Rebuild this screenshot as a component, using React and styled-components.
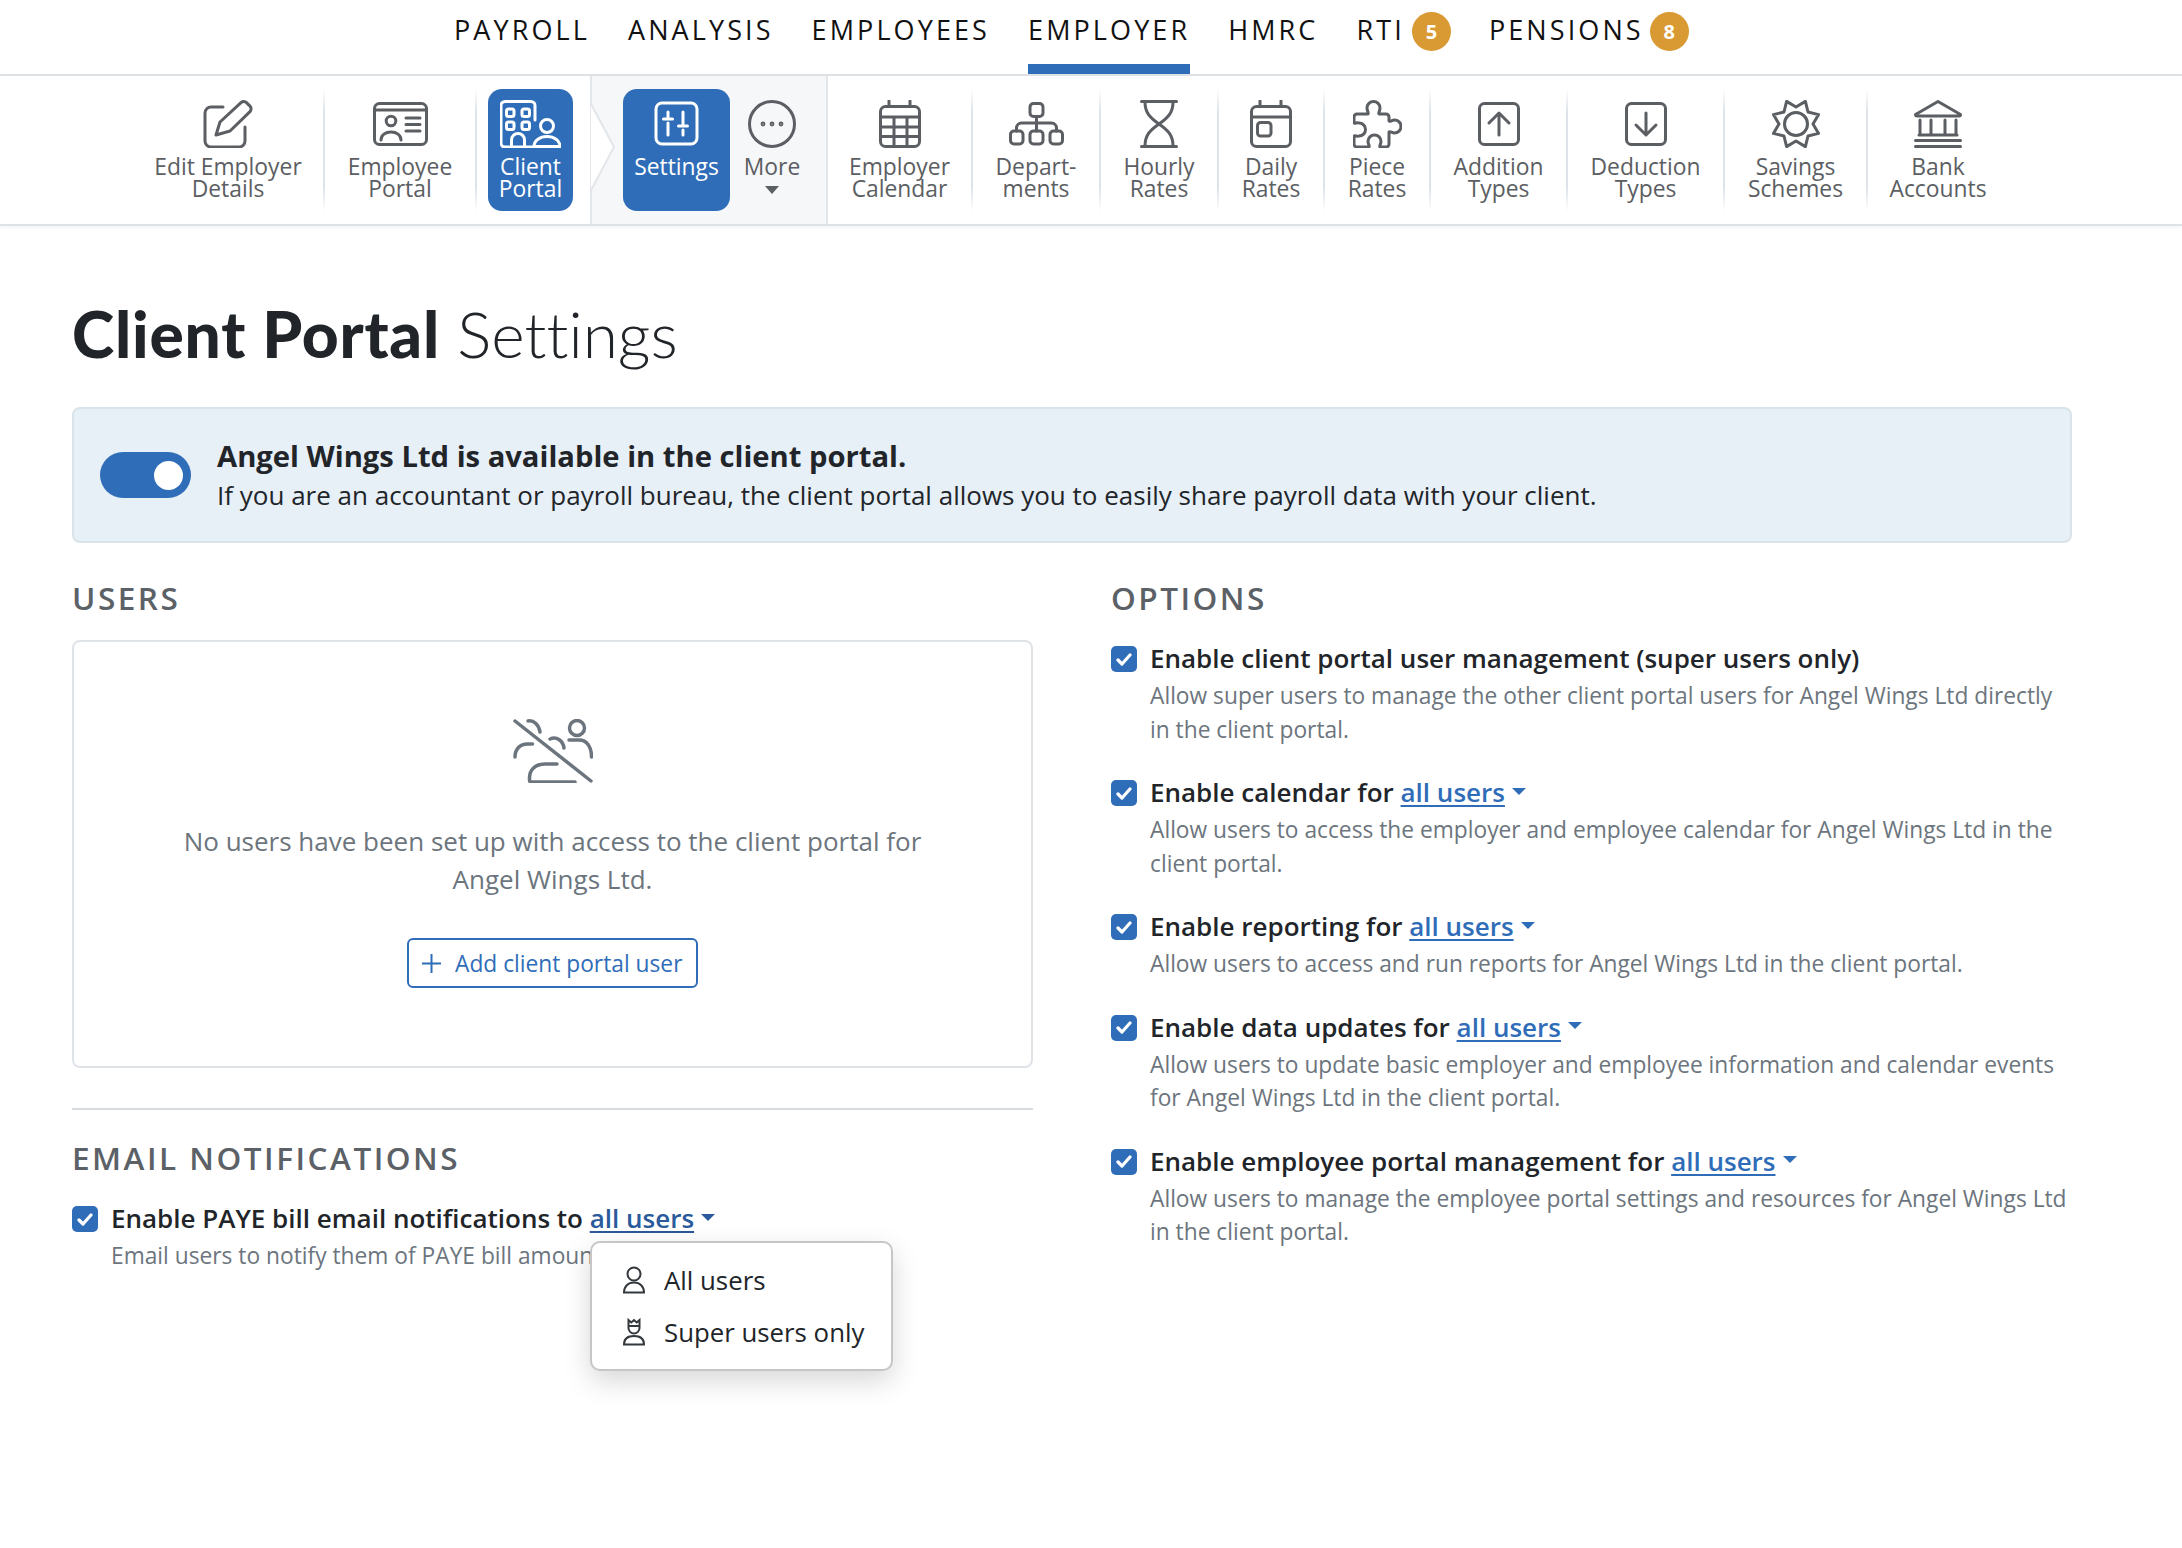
import React from "react";
import styled, { createGlobalStyle } from "styled-components";

const BLUE = "#2f6db8";
const ICON_GREY = "#5b5e62";

const GlobalStyle = createGlobalStyle`
  html, body {
    margin: 0;
    padding: 0;
    background: #fff;
    font-family: "Open Sans", "Liberation Sans", sans-serif;
    color: #212529;
  }
  #root { min-height: 1548px; }
  * { box-sizing: border-box; }
`;

const TopNav = styled.nav`
  display: flex;
  height: 76px;
  padding-left: 454px;
  gap: 38px;
  border-bottom: 2px solid #dfe3e7;
`;

const NavItem = styled.a`
  display: flex;
  align-items: flex-start;
  height: 74px;
  padding-top: 10px;
  font-size: 27px;
  line-height: 40px;
  letter-spacing: 3.1px;
  color: #111;
  border-bottom: 10px solid ${({ $active }) => ($active ? BLUE : "transparent")};
`;

const Badge = styled.span`
  width: 39px;
  height: 39px;
  margin: 2px 0 0 ${({ $gap }) => $gap}px;
  border-radius: 50%;
  background: #d99a33;
  color: #fff;
  font-size: 20px;
  font-weight: 700;
  line-height: 39px;
  letter-spacing: 0;
  text-align: center;
`;

const Toolbar = styled.div`
  display: flex;
  height: 150px;
  padding-left: 133px;
  border-bottom: 2px solid #dfe3e7;
  box-shadow: 0 1px 3px rgba(60, 70, 80, 0.08);
`;

const ToolItem = styled.a`
  display: flex;
  flex-direction: column;
  align-items: center;
  flex: none;
  width: ${({ $w }) => $w}px;
  height: 122px;
  margin: 13px 0;
  padding-top: 11px;
  color: ${ICON_GREY};
  font-size: 22.85px;
  line-height: 22.2px;
  text-align: center;
  border-right: ${({ $plain }) => ($plain ? "0" : "2px solid")};
  border-image: linear-gradient(to bottom, rgba(221, 227, 232, 0), #dde3e8 20%, #dde3e8 80%, rgba(221, 227, 232, 0)) 1;
`;

const ActiveTool = styled(ToolItem)`
  width: ${({ $w }) => $w}px;
  margin-left: ${({ $ml }) => $ml || 0}px;
  border: 0;
  border-radius: 14px;
  background: ${BLUE};
  color: #fff;
`;

const ToolLabel = styled.span`
  display: block;
  margin-top: 8px;
  white-space: pre-line;
`;

const Glyph = styled.svg`
  display: block;
  flex: none;
  height: 48px;
  fill: none;
  stroke: currentColor;
  stroke-width: 3;
  stroke-linecap: round;
  stroke-linejoin: round;
`;

const ContextGroup = styled.div`
  position: relative;
  display: flex;
  flex: none;
  width: 238px;
  margin-left: 17px;
  padding-left: 31px;
  background: #f6f7f9;
  border-left: 2px solid #e2e6ea;
  border-right: 2px solid #e2e6ea;
`;

const Chevron = styled.svg`
  position: absolute;
  left: -2px;
  top: 26px;
  width: 26px;
  height: 90px;
`;

const MoreCaret = styled.span`
  display: block;
  width: 0;
  height: 0;
  margin-top: 8px;
  border-left: 7px solid transparent;
  border-right: 7px solid transparent;
  border-top: 8px solid ${ICON_GREY};
`;

const Main = styled.main`
  width: 2000px;
  margin-left: 72px;
`;

const Title = styled.h1`
  margin: 0;
  padding-top: 63px;
  height: 181px;
  font-family: Lato, "Open Sans", sans-serif;
  font-size: 64px;
  line-height: 90px;
  font-weight: 300;
  font-variant-ligatures: none;
  color: #212529;
  strong {
    font-weight: 900;
    letter-spacing: 0.8px;
  }
`;

const Banner = styled.section`
  display: flex;
  align-items: center;
  height: 136px;
  padding-left: 26px;
  gap: 26px;
  background: #e7eff7;
  border: 2px solid #d9e3ea;
  border-radius: 8px;
`;

const BannerCopy = styled.div`
  padding-top: 2px;
`;

const Toggle = styled.span`
  display: flex;
  align-items: center;
  justify-content: flex-end;
  flex: none;
  width: 91px;
  height: 46px;
  padding-right: 8px;
  border-radius: 23px;
  background: ${BLUE};
  &::after {
    content: "";
    width: 29px;
    height: 29px;
    border-radius: 50%;
    background: #fff;
  }
`;

const BannerTitle = styled.div`
  font-size: 29.2px;
  line-height: 39px;
  font-weight: 700;
`;

const BannerText = styled.div`
  font-size: 26px;
  line-height: 39px;
`;

const Columns = styled.div`
  display: grid;
  grid-template-columns: 961px 961px;
  column-gap: 78px;
  padding-top: 32px;
`;

const Heading = styled.h2`
  margin: 0;
  height: 64px;
  font-size: 31.5px;
  line-height: 46px;
  font-weight: 600;
  letter-spacing: 2.5px;
  color: #5b6166;
`;

const EmptyBox = styled.div`
  display: flex;
  flex-direction: column;
  align-items: center;
  height: 428px;
  margin-top: 1px;
  padding-top: 77px;
  border: 2px solid #dfe3e7;
  border-radius: 8px;
  color: #6c757d;
  font-size: 26px;
  line-height: 38px;
  text-align: center;
`;

const EmptyText = styled.p`
  margin: 39px 0 0;
  width: 780px;
`;

const AddButton = styled.button`
  display: flex;
  align-items: center;
  gap: 14px;
  width: 291px;
  height: 50px;
  margin-top: 40px;
  padding: 0 0 0 13px;
  border: 2px solid ${BLUE};
  border-radius: 6px;
  background: #fff;
  color: ${BLUE};
  font-family: inherit;
  font-size: 22.75px;
`;

const Divider = styled.hr`
  height: 2px;
  margin: 40px 0 25px;
  border: 0;
  background: #d7dbdf;
`;

const Option = styled.div`
  display: grid;
  grid-template-columns: 26px 1fr;
  column-gap: 13px;
  padding-bottom: 27px;
`;

const Check = styled.span`
  display: flex;
  align-items: center;
  justify-content: center;
  width: 26px;
  height: 26px;
  margin-top: 7px;
  border-radius: 5px;
  background: ${BLUE};
`;

const OptionLabel = styled.div`
  position: relative;
  display: flex;
  align-items: center;
  height: 40px;
  padding-bottom: 2px;
  font-size: 26px;
  font-weight: 600;
  white-space: pre;
`;

const OptionText = styled.div`
  grid-column: 2;
  font-size: 22.75px;
  line-height: 33.5px;
  color: #6c757d;
`;

const UsersLink = styled.a`
  color: ${({ $focus }) => ($focus ? "#2a5a9c" : BLUE)};
  text-decoration: underline;
  text-decoration-thickness: 2px;
  text-underline-offset: 3px;
`;

const Caret = styled.span`
  width: 0;
  height: 0;
  margin: -2px 0 0 7px;
  border-left: 7px solid transparent;
  border-right: 7px solid transparent;
  border-top: 7px solid ${({ $focus }) => ($focus ? "#2a5a9c" : BLUE)};
`;

const Menu = styled.div`
  position: absolute;
  left: 479px;
  top: 42px;
  z-index: 2;
  width: 303px;
  height: 130px;
  padding: 11px 0;
  background: #fff;
  border: 2px solid #c4c6c8;
  border-radius: 10px;
  box-shadow: 0 10px 28px rgba(0, 0, 0, 0.16);
`;

const MenuItem = styled.a`
  display: flex;
  align-items: center;
  gap: 18px;
  height: 52px;
  padding-left: 30px;
  font-size: 25.8px;
  font-weight: 400;
  color: #212529;
`;

const MenuGlyph = styled.svg`
  flex: none;
  width: 24px;
  height: 28px;
  fill: none;
  stroke: #33383d;
  stroke-width: 2;
`;

const tick = (
  <svg width="16" height="13" viewBox="0 0 16 13" fill="none" stroke="#fff" strokeWidth="3.2" strokeLinecap="round" strokeLinejoin="round">
    <path d="M2 7l4 4 8-9" />
  </svg>
);

const icons = {
  edit: (
    <Glyph viewBox="0 0 50 48" width="50">
      <path d="M20 7H8a6 6 0 0 0-6 6v28a6 6 0 0 0 6 6h28a6 6 0 0 0 6-6V27" />
      <path d="M13 35l4-13L38 2.6a4 4 0 0 1 5.5 0l3.5 3.5a4 4 0 0 1 0 5.5L27 31z" />
    </Glyph>
  ),
  card: (
    <Glyph viewBox="0 0 55 48" width="55">
      <rect x="1.5" y="3.5" width="52" height="41" rx="5" />
      <path d="M1.5 10h52M33 18h14M33 24.5h14M33 31h14M8 40c0-5 4.5-8 10-8s10 3 10 8" />
      <circle cx="18" cy="21" r="4.8" />
    </Glyph>
  ),
  client: (
    <Glyph viewBox="0 0 61 48" width="61">
      <path d="M33 47H5a4 4 0 0 1-4-4V5.500a4 4 0 0 1 4-4h26a4 4 0 0 1 4 4V20" />
      <rect x="6.500" y="9" width="7.500" height="7.500" rx="2" />
      <rect x="22" y="9" width="7.500" height="7.500" rx="2" />
      <rect x="6.500" y="22" width="7.500" height="7.500" rx="2" />
      <rect x="22" y="22" width="7.500" height="7.500" rx="2" />
      <path d="M11.500 47V40a6.500 6.500 0 0 1 13 0v7" />
      <circle cx="47" cy="26" r="6.500" />
      <path d="M34 46.500c0-6 6-10 13-10s13 4 13 10z" />
    </Glyph>
  ),
  sliders: (
    <Glyph viewBox="0 0 46 48" width="46">
      <rect x="2" y="3" width="41" height="41" rx="6" />
      <path d="M14 12v5M9.500 19h9M14 23v12M29 12v12M24.500 26h9M29 30v5" />
    </Glyph>
  ),
  more: (
    <Glyph viewBox="0 0 48 48" width="48">
      <circle cx="24" cy="24" r="22.500" />
      <circle cx="15" cy="24" r="0.900" />
      <circle cx="24" cy="24" r="0.900" />
      <circle cx="33" cy="24" r="0.900" />
    </Glyph>
  ),
  calendar: (
    <Glyph viewBox="0 0 42 48" width="42">
      <rect x="1.500" y="6.500" width="39" height="40" rx="5" />
      <path d="M10 1v5M31 1v5M1.500 17h39M1.500 27h39M1.500 36.500h39M15 17v29M28 17v29" />
    </Glyph>
  ),
  tree: (
    <Glyph viewBox="0 0 55 48" width="55">
      <rect x="21" y="3.500" width="13" height="13" rx="3.500" />
      <rect x="1.500" y="31" width="12.500" height="13" rx="3.500" />
      <rect x="21" y="31" width="13" height="13" rx="3.500" />
      <rect x="41" y="31" width="12.500" height="13" rx="3.500" />
      <path d="M27.500 16.500V31M7.500 31v-3a5 5 0 0 1 5-5h30a5 5 0 0 1 5 5v3" />
    </Glyph>
  ),
  hourglass: (
    <Glyph viewBox="0 0 38 48" width="38">
      <path d="M1.500 1.500h35M1.500 46.500h35" />
      <path d="M5 2c0 10 4 15 14 22 10 7 14 12 14 22M33 2c0 10-4 15-14 22C9 31 5 36 5 46" />
    </Glyph>
  ),
  day: (
    <Glyph viewBox="0 0 42 48" width="42">
      <rect x="1.500" y="6.500" width="39" height="40" rx="5" />
      <path d="M10 1v5M31 1v5M1.500 17h39" />
      <rect x="7.500" y="22.500" width="13.500" height="13.500" rx="3" />
    </Glyph>
  ),
  puzzle: (
    <Glyph viewBox="0 0 49 48" width="49">
      <path d="M4 14h11c1-1-1-3-1-6a6.500 6.500 0 0 1 13 0c0 3-2 5-1 6h7a3 3 0 0 1 3 3v4c1 1 3-1 5.500-1a6.500 6.500 0 0 1 0 13c-2.500 0-4.500-2-5.500-1v12a3 3 0 0 1-3 3h-6c-1-1 1-3 1-5.500a6.500 6.500 0 0 0-13 0c0 2.500 2 4.500 1 5.500H4a3 3 0 0 1-3-3v-8c1-1 3 1 5 0a6.500 6.500 0 0 0 0-13c-2-1-4 1-5 0v-6a3 3 0 0 1 3-3z" />
    </Glyph>
  ),
  up: (
    <Glyph viewBox="0 0 42 48" width="42">
      <rect x="1.500" y="3.500" width="39" height="41" rx="5" />
      <path d="M21 35V13M11 23l10-10 10 10" />
    </Glyph>
  ),
  down: (
    <Glyph viewBox="0 0 42 48" width="42">
      <rect x="1.500" y="3.500" width="39" height="41" rx="5" />
      <path d="M21 13v22M11 25l10 10 10-10" />
    </Glyph>
  ),
  sun: (
    <Glyph viewBox="0 0 48 48" width="48">
      <path d="M24 7l9.400-5.600L36 12l10.600 2.600L41 24l5.600 9.400L36 36l-2.600 10.600L24 41l-9.400 5.600L12 36 1.400 33.400 7 24 1.400 14.600 12 12l2.600-10.600z" />
      <circle cx="24" cy="24" r="11.500" />
    </Glyph>
  ),
  bank: (
    <Glyph viewBox="0 0 48 48" width="48">
      <path d="M24 1.500L1.500 14.500c0 1 .5 1.500 1.500 1.500h42c1 0 1.500-.5 1.500-1.500z" />
      <path d="M6 20v14M17 20v14M31 20v14M42 20v14M5 35h38M1.500 40.500h45M1.500 46.500h45" />
    </Glyph>
  ),
};

const tools = [
  { w: 192, icon: icons.edit, label: "Edit Employer\nDetails" },
  { w: 152, icon: icons.card, label: "Employee\nPortal" },
];

const moreTools = [
  { w: 145, icon: icons.calendar, label: "Employer\nCalendar" },
  { w: 128, icon: icons.tree, label: "Depart-\nments" },
  { w: 118, icon: icons.hourglass, label: "Hourly\nRates" },
  { w: 106, icon: icons.day, label: "Daily\nRates" },
  { w: 106, icon: icons.puzzle, label: "Piece\nRates" },
  { w: 137, icon: icons.up, label: "Addition\nTypes" },
  { w: 157, icon: icons.down, label: "Deduction\nTypes" },
  { w: 143, icon: icons.sun, label: "Savings\nSchemes" },
  { w: 140, icon: icons.bank, label: "Bank\nAccounts", plain: true },
];

const options = [
  {
    label: "Enable client portal user management (super users only)",
    text: "Allow super users to manage the other client portal users for Angel Wings Ltd directly in the client portal.",
  },
  {
    label: "Enable calendar for ",
    link: true,
    text: "Allow users to access the employer and employee calendar for Angel Wings Ltd in the client portal.",
  },
  {
    label: "Enable reporting for ",
    link: true,
    text: "Allow users to access and run reports for Angel Wings Ltd in the client portal.",
  },
  {
    label: "Enable data updates for ",
    link: true,
    text: "Allow users to update basic employer and employee information and calendar events for Angel Wings Ltd in the client portal.",
  },
  {
    label: "Enable employee portal management for ",
    link: true,
    text: "Allow users to manage the employee portal settings and resources for Angel Wings Ltd in the client portal.",
  },
];

const UserGlyph = () => (
  <MenuGlyph viewBox="0 0 24 28">
    <circle cx="12" cy="8" r="6.500" />
    <path d="M2 26.500c0-6 4-10 10-10s10 4 10 10z" />
  </MenuGlyph>
);

const SuperGlyph = () => (
  <MenuGlyph viewBox="0 0 24 28">
    <path d="M6.500 2v8a5.500 5.500 0 0 0 11 0V2l-2.800 2.500L12 2 9.300 4.500zM6.500 8h11" />
    <path d="M2 26.500c0-6 4-8.500 10-8.500s10 2.500 10 8.500z" />
  </MenuGlyph>
);

export default function App() {
  return (
    <>
      <GlobalStyle />
      <TopNav>
        <NavItem>PAYROLL</NavItem>
        <NavItem>ANALYSIS</NavItem>
        <NavItem>EMPLOYEES</NavItem>
        <NavItem $active>EMPLOYER</NavItem>
        <NavItem>HMRC</NavItem>
        <NavItem>
          RTI<Badge $gap={7}>5</Badge>
        </NavItem>
        <NavItem>
          PENSIONS<Badge $gap={6}>8</Badge>
        </NavItem>
      </TopNav>

      <Toolbar>
        {tools.map((t) => (
          <ToolItem key={t.label} $w={t.w}>
            {t.icon}
            <ToolLabel>{t.label}</ToolLabel>
          </ToolItem>
        ))}
        <ActiveTool $w={85} $ml={11} $plain>
          {icons.client}
          <ToolLabel>{"Client\nPortal"}</ToolLabel>
        </ActiveTool>
        <ContextGroup>
          <Chevron viewBox="0 0 26 90">
            <path d="M0 0L24 45 0 90z" fill="#fff" stroke="#e2e6ea" strokeWidth="2" />
          </Chevron>
          <ActiveTool $w={107} $plain>
            {icons.sliders}
            <ToolLabel>Settings</ToolLabel>
          </ActiveTool>
          <ToolItem $w={84} $plain>
            {icons.more}
            <ToolLabel>More</ToolLabel>
            <MoreCaret />
          </ToolItem>
        </ContextGroup>
        {moreTools.map((t) => (
          <ToolItem key={t.label} $w={t.w} $plain={t.plain}>
            {t.icon}
            <ToolLabel>{t.label}</ToolLabel>
          </ToolItem>
        ))}
      </Toolbar>

      <Main>
        <Title>
          <strong>Client Portal</strong> Settings
        </Title>

        <Banner>
          <Toggle />
          <BannerCopy>
            <BannerTitle>Angel Wings Ltd is available in the client portal.</BannerTitle>
            <BannerText>
              If you are an accountant or payroll bureau, the client portal allows you to easily share payroll data with your client.
            </BannerText>
          </BannerCopy>
        </Banner>

        <Columns>
          <div>
            <Heading>USERS</Heading>
            <EmptyBox>
              <svg width="80" height="64" viewBox="0 0 80 64" fill="none" stroke="#6c757d" strokeWidth="3.500" strokeLinecap="round" strokeLinejoin="round">
                <path d="M2 2l76 60" />
                <circle cx="64" cy="9" r="7.500" />
                <path d="M56 21h10c8 0 12.500 7 12.500 17" />
                <path d="M37 20c7-3 13 2 14 9" />
                <path d="M15 2c6-1 11 4 12 11" />
                <path d="M2 38c0-8 5-13 12.500-13h5" />
                <path d="M44 45H32c-10 0-15.500 6-15.500 14v2c0 1 .5 2 2 2H62" />
              </svg>
              <EmptyText>No users have been set up with access to the client portal for Angel Wings Ltd.</EmptyText>
              <AddButton>
                <svg width="19" height="19" viewBox="0 0 19 19" stroke={BLUE} strokeWidth="2">
                  <path d="M9.500 0v19M0 9.500h19" />
                </svg>
                Add client portal user
              </AddButton>
            </EmptyBox>
            <Divider />
            <Heading>EMAIL NOTIFICATIONS</Heading>
            <Option>
              <Check>{tick}</Check>
              <OptionLabel>
                {"Enable PAYE bill email notifications to "}
                <UsersLink $focus>all users</UsersLink>
                <Caret $focus />
                <Menu>
                  <MenuItem>
                    <UserGlyph />
                    All users
                  </MenuItem>
                  <MenuItem>
                    <SuperGlyph />
                    Super users only
                  </MenuItem>
                </Menu>
              </OptionLabel>
              <OptionText>Email users to notify them of PAYE bill amounts.</OptionText>
            </Option>
          </div>
          <div>
            <Heading>OPTIONS</Heading>
            {options.map((o) => (
              <Option key={o.label}>
                <Check>{tick}</Check>
                <OptionLabel>
                  {o.label}
                  {o.link && <UsersLink>all users</UsersLink>}
                  {o.link && <Caret />}
                </OptionLabel>
                <OptionText>{o.text}</OptionText>
              </Option>
            ))}
          </div>
        </Columns>
      </Main>
    </>
  );
}
